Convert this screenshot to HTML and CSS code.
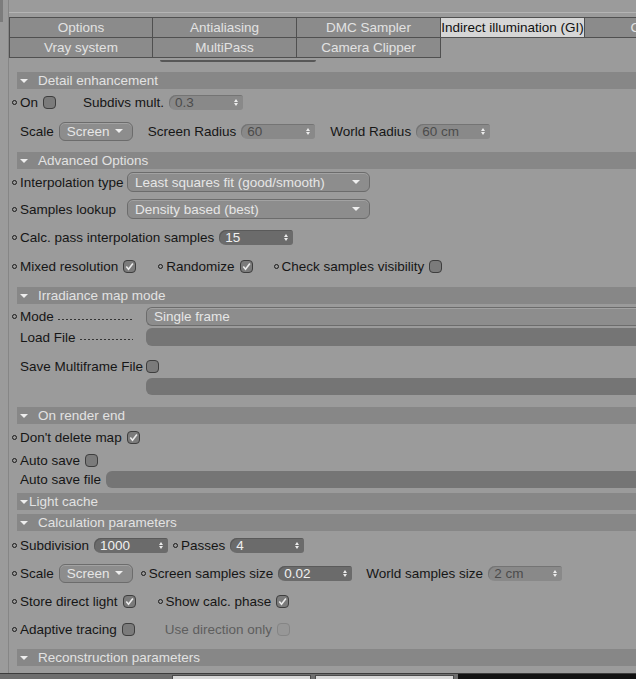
FILE: index.html
```html
<!DOCTYPE html>
<html lang="en">
<head>
  <meta charset="UTF-8">
  <meta name="viewport" content="width=device-width, initial-scale=1.0">
  <title>Indirect illumination (GI)</title>
  <link rel="stylesheet" href="styles.css">
</head>
<body>
  <div class="window">
    <div class="gutter"><div class="thumb"></div></div>
    <div class="main">
      <div class="topbar"></div>

      <div class="tabs">
        <div class="tab-row">
          <a>Options</a><a>Antialiasing</a><a>DMC Sampler</a><a class="active">Indirect illumination (GI)</a><a>Caustics</a>
        </div>
        <div class="tab-row">
          <a>Vray system</a><a>MultiPass</a><a>Camera Clipper</a>
        </div>
      </div>
      <div class="under-tabs"><div class="stub"></div></div>

      <!-- detail enhancement -->
      <div class="head">Detail enhancement</div>
      <div class="row r-on">
        <span class="dot"></span><span>On</span>
        <span class="check"></span>
        <span class="ml29">Subdivs mult.</span>
        <span class="spin">0.3<span class="arr"></span></span>
      </div>
      <div class="row r-scale">
        <span>Scale</span>
        <span class="drop w74">Screen<span class="caret"></span></span>
        <span class="ml15">Screen Radius</span>
        <span class="spin">60<span class="arr"></span></span>
        <span class="ml15">World Radius</span>
        <span class="spin">60 cm<span class="arr"></span></span>
      </div>

      <!-- advanced options -->
      <div class="head m6">Advanced Options</div>
      <div class="row r-interp">
        <span class="dot"></span><span class="lab">Interpolation type</span>
        <span class="drop w243">Least squares fit (good/smooth)<span class="caret"></span></span>
      </div>
      <div class="row r-lookup">
        <span class="dot"></span><span class="lab">Samples lookup</span>
        <span class="drop w243">Density based (best)<span class="caret"></span></span>
      </div>
      <div class="row r-calc">
        <span class="dot"></span><span>Calc. pass interpolation samples</span>
        <span class="spin dark">15<span class="arr"></span></span>
      </div>
      <div class="row r-mixed">
        <span class="dot"></span><span>Mixed resolution</span>
        <span class="check on"><svg viewBox="0 0 11 11"><path d="M2.3 5.6 L4.5 8.2 L8.9 2.5" fill="none" stroke="#ececec" stroke-width="1.6"/></svg></span>
        <span class="dot ml22"></span><span>Randomize</span>
        <span class="check on"><svg viewBox="0 0 11 11"><path d="M2.3 5.6 L4.5 8.2 L8.9 2.5" fill="none" stroke="#ececec" stroke-width="1.6"/></svg></span>
        <span class="dot ml21"></span><span>Check samples visibility</span>
        <span class="check"></span>
      </div>

      <!-- irradiance map -->
      <div class="head m7">Irradiance map mode</div>
      <div class="row r-mode">
        <span class="dot"></span><span class="lead">Mode<i class="leader"></i></span>
        <span class="drop wide">Single frame</span>
      </div>
      <div class="row r-load">
        <span class="lead">Load File<i class="leader"></i></span>
        <span class="field"></span>
      </div>
      <div class="row r-save">
        <span class="lead">Save Multiframe File</span>
        <span class="check"></span>
      </div>
      <div class="row r-bar">
        <span class="lead"></span>
        <span class="field"></span>
      </div>

      <!-- on render end -->
      <div class="head m12">On render end</div>
      <div class="row r-keep">
        <span class="dot"></span><span>Don't delete map</span>
        <span class="check on"><svg viewBox="0 0 11 11"><path d="M2.3 5.6 L4.5 8.2 L8.9 2.5" fill="none" stroke="#ececec" stroke-width="1.6"/></svg></span>
      </div>
      <div class="row r-auto">
        <span class="dot"></span><span>Auto save</span>
        <span class="check"></span>
      </div>
      <div class="row r-file">
        <span>Auto save file</span>
        <span class="field"></span>
      </div>

      <!-- light cache -->
      <div class="head tight m5">Light cache</div>
      <div class="head m4">Calculation parameters</div>
      <div class="row r-lc">
        <span class="dot"></span><span>Subdivision</span>
        <span class="spin dark">1000<span class="arr"></span></span>
        <span class="dot ml5"></span><span>Passes</span>
        <span class="spin dark">4<span class="arr"></span></span>
      </div>
      <div class="row r-lc">
        <span class="dot"></span><span>Scale</span>
        <span class="drop w74">Screen<span class="caret"></span></span>
        <span class="dot ml8"></span><span>Screen samples size</span>
        <span class="spin dark">0.02<span class="arr"></span></span>
        <span class="ml14">World samples size</span>
        <span class="spin">2 cm<span class="arr"></span></span>
      </div>
      <div class="row r-lc">
        <span class="dot"></span><span>Store direct light</span>
        <span class="check on"><svg viewBox="0 0 11 11"><path d="M2.3 5.6 L4.5 8.2 L8.9 2.5" fill="none" stroke="#ececec" stroke-width="1.6"/></svg></span>
        <span class="dot ml22"></span><span>Show calc. phase</span>
        <span class="check on"><svg viewBox="0 0 11 11"><path d="M2.3 5.6 L4.5 8.2 L8.9 2.5" fill="none" stroke="#ececec" stroke-width="1.6"/></svg></span>
      </div>
      <div class="row r-lc">
        <span class="dot"></span><span>Adaptive tracing</span>
        <span class="check"></span>
        <span class="dim ml30">Use direction only</span>
        <span class="check off"></span>
      </div>

      <div class="head m6">Reconstruction parameters</div>
    </div>
  </div>

  <div class="dock">
    <span class="dock-left"></span>
    <span class="dock-tab"></span>
    <span class="dock-tab"></span>
    <span class="dock-dark"></span>
  </div>
</body>
</html>
```

FILE: styles.css
```css
*{
  box-sizing: border-box;
}
body{
  margin: 0;
  height: 679px;
  overflow: hidden;
  background-color: #9b9b9b;
  font-family: "Liberation Sans", Arial, sans-serif;
  font-size: 13.5px;
  color: #161616;
}
.window{
  display: flex;
  height: 673px;
}
.gutter{
  width: 8px;
  flex: none;
}
.gutter .thumb{
  width: 3px;
  height: 22px;
  background-color: #7c7c7c;
}
.main{
  flex: 1;
  min-width: 0;
  overflow: hidden;
  border-left: 1px solid #868686;
}
.topbar{
  height: 13px;
  border-bottom: 1px solid #b4b4b4;
}

/* tabs */
.tabs{
  margin-top: 4px;
}
.tab-row{
  display: flex;
}
.tab-row a{
  flex: none;
  width: 144px;
  height: 20px;
  line-height: 19px;
  text-align: center;
  white-space: nowrap;
  background-color: #8b8b8b;
  color: #e2e2e2;
  border-right: 1px solid #505050;
  border-bottom: 1px solid #505050;
}
.tab-row:first-child a{
  height: 21px;
  border-top: 1px solid #505050;
}
.tab-row a:first-child{
  border-left: 1px solid #505050;
}
.tab-row a.active{
  background-color: #d6d6d6;
  color: #111;
}
.under-tabs{
  height: 14px;
  padding-top: 2px;
}
.under-tabs .stub{
  width: 156px;
  height: 2px;
  margin-left: 151px;
  border-radius: 0 0 2px 2px;
  background-color: #575757;
}

/* section headers */
.head{
  display: flex;
  align-items: center;
  height: 17px;
  margin-left: 8px;
  padding-left: 3px;
  white-space: nowrap;
  background-color: #878787;
  color: #e2e2e2;
}
.head::before{
  content: '';
  border-left: 4px solid transparent;
  border-right: 4px solid transparent;
  border-top: 4px solid #eee;
  margin-right: 10px;
}
.head.tight::before{
  margin-right: 1px;
}
.m4{ margin-top: 4px; }
.m5{ margin-top: 5px; }
.m6{ margin-top: 6px; }
.m7{ margin-top: 7px; }
.m12{ margin-top: 12px; }

/* rows */
.row{
  display: flex;
  align-items: center;
  gap: 5px;
  padding-left: 11px;
  white-space: nowrap;
}
.r-on{ height: 27px; }
.r-scale{ height: 30px; }
.r-interp{ height: 26px; }
.r-lookup{ height: 28px; }
.r-calc{ height: 29px; }
.r-mixed{ height: 28px; }
.r-mode{ height: 19px; margin-top: 3px; }
.r-load{ height: 18px; margin-top: 2px; }
.r-save{ height: 32px; padding-top: 8px; }
.r-bar{ height: 17px; }
.r-keep{ height: 27px; }
.r-auto{ height: 18px; }
.r-file{ height: 17px; margin-top: 2px; }
.r-lc{ height: 28px; }

.ml5{ margin-left: 0; }
.ml8{ margin-left: 3px; }
.ml14{ margin-left: 9px; }
.ml15{ margin-left: 10px; }
.ml21{ margin-left: 16px; }
.ml22{ margin-left: 17px; }
.ml29{ margin-left: 22px; }
.ml30{ margin-left: 25px; }

.dot{
  flex: none;
  width: 5px;
  height: 5px;
  border: 1px solid #1a1a1a;
  border-radius: 50%;
  margin-right: -2px;
}
.row > .dot:first-child{
  margin-left: -8px;
}
.dim{
  color: #5e5e5e;
}
.lab{
  width: 102px;
}
.lead{
  display: flex;
  align-items: center;
  flex: none;
  width: 121px;
}
.leader{
  flex: 1;
  height: 1px;
  margin: 5px 8px 0 4px;
  background-image: linear-gradient(to right, #333 50%, transparent 50%);
  background-size: 4px 1px;
}

/* controls */
.check{
  flex: none;
  display: flex;
  align-items: center;
  justify-content: center;
  width: 13px;
  height: 13px;
  border: 1px solid #3e3e3e;
  border-radius: 4px;
  background-color: #7b7b7b;
}
.check svg{
  width: 11px;
  height: 11px;
}
.check.off{
  border-color: #858585;
  background-color: #979797;
}
.spin{
  flex: none;
  display: flex;
  align-items: center;
  width: 74px;
  height: 15px;
  padding-left: 6px;
  border-radius: 7px 3px 3px 7px;
  background-color: #898989;
  color: #4c4c4c;
  box-shadow: inset 1px 1px 0 #747474;
}
.spin.dark{
  background-color: #6b6b6b;
  color: #f0f0f0;
  box-shadow: inset 1px 1px 0 #5a5a5a;
}
.spin .arr{
  display: flex;
  flex-direction: column;
  gap: 1px;
  margin-left: auto;
  margin-right: 5px;
}
.spin .arr::before,
.spin .arr::after{
  content: '';
  border-left: 2.5px solid transparent;
  border-right: 2.5px solid transparent;
}
.spin .arr::before{
  border-bottom: 3px solid #ececec;
}
.spin .arr::after{
  border-top: 3px solid #ececec;
}
.drop{
  flex: none;
  display: flex;
  align-items: center;
  height: 19px;
  padding-left: 7px;
  border: 1px solid #6c6c6c;
  border-radius: 6px;
  background-color: #8d8d8d;
  color: #e6e6e6;
  box-shadow: inset 0 1px 0 #a2a2a2;
}
.drop.w74{ width: 74px; }
.drop.w243{ width: 243px; height: 20px; }
.drop.wide{
  flex: 1;
  border-radius: 6px 0 0 6px;
  border-right: 0;
}
.drop .caret{
  margin-left: auto;
  margin-right: 9px;
  border-left: 4px solid transparent;
  border-right: 4px solid transparent;
  border-top: 4px solid #eee;
}
.field{
  flex: 1;
  height: 17px;
  border-radius: 6px 0 0 6px;
  background-color: #757575;
}
.r-load .field{
  height: 18px;
}

/* bottom dock */
.dock{
  display: flex;
  height: 6px;
  border-top: 1px solid #3c3c3c;
  background-color: #6e6e6e;
}
.dock-left{
  width: 172px;
}
.dock-tab{
  width: 139px;
  margin-right: 4px;
  margin-top: 1px;
  border: 1px solid #4a4a4a;
  border-bottom: 0;
  background-color: #d8d8d8;
}
.dock-dark{
  flex: 1;
  background-color: #111;
}
```
